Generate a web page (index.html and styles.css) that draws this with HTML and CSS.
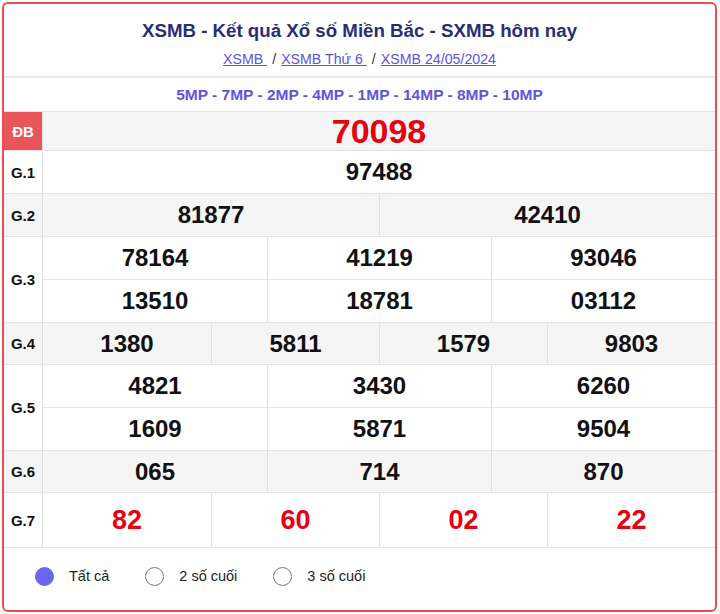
FILE: index.html
```html
<!DOCTYPE html>
<html lang="vi">
<head>
<meta charset="utf-8">
<title>XSMB</title>
<link rel="stylesheet" href="styles.css">
</head>
<body>
<div class="box">
  <div class="head">
    <h1 class="title">XSMB - Kết quả Xổ số Miền Bắc - SXMB hôm nay</h1>
    <div class="crumbs">
      <a href="#">XSMB </a><span class="sep">/</span><a href="#">XSMB Thứ 6 </a><span class="sep">/</span><a href="#">XSMB 24/05/2024</a>
    </div>
  </div>
  <div class="codes">5MP - 7MP - 2MP - 4MP - 1MP - 14MP - 8MP - 10MP</div>
  <div class="results">
    <div class="row db gray">
      <div class="label">ĐB</div>
      <div class="cells c1"><div class="cell">70098</div></div>
    </div>
    <div class="row">
      <div class="label">G.1</div>
      <div class="cells c1"><div class="cell">97488</div></div>
    </div>
    <div class="row gray">
      <div class="label">G.2</div>
      <div class="cells c2"><div class="cell">81877</div><div class="cell">42410</div></div>
    </div>
    <div class="row">
      <div class="label">G.3</div>
      <div class="cells c3">
        <div class="cell">78164</div><div class="cell">41219</div><div class="cell">93046</div>
        <div class="cell">13510</div><div class="cell">18781</div><div class="cell">03112</div>
      </div>
    </div>
    <div class="row gray short">
      <div class="label">G.4</div>
      <div class="cells c4"><div class="cell">1380</div><div class="cell">5811</div><div class="cell">1579</div><div class="cell">9803</div></div>
    </div>
    <div class="row">
      <div class="label">G.5</div>
      <div class="cells c3">
        <div class="cell">4821</div><div class="cell">3430</div><div class="cell">6260</div>
        <div class="cell">1609</div><div class="cell">5871</div><div class="cell">9504</div>
      </div>
    </div>
    <div class="row gray short">
      <div class="label">G.6</div>
      <div class="cells c3"><div class="cell">065</div><div class="cell">714</div><div class="cell">870</div></div>
    </div>
    <div class="row g7">
      <div class="label">G.7</div>
      <div class="cells c4"><div class="cell">82</div><div class="cell">60</div><div class="cell">02</div><div class="cell">22</div></div>
    </div>
  </div>
  <div class="filters">
    <label class="opt"><span class="radio on"></span>Tất cả</label>
    <label class="opt"><span class="radio"></span>2 số cuối</label>
    <label class="opt"><span class="radio"></span>3 số cuối</label>
  </div>
</div>
</body>
</html>
```
FILE: styles.css
```css
* { box-sizing: border-box; }
html, body { margin: 0; padding: 0; background: #fff; }
body { font-family: "Liberation Sans", Arial, sans-serif; color: #111; }

.box {
  margin: 2px 3px 2px 2px;
  height: 610px;
  border: 2px solid #ee4d50;
  border-radius: 6px;
  overflow: hidden;
  display: flex;
  flex-direction: column;
}

.head {
  padding: 16px 0 7px;
  text-align: center;
  border-bottom: 2px solid #e8e8f0;
}
.title {
  margin: 0;
  font-size: 18.7px;
  line-height: 22px;
  font-weight: bold;
  color: #282e74;
}
.crumbs {
  margin-top: 7px;
  font-size: 14.2px;
  line-height: 20px;
  color: #444;
}
.crumbs a { color: #5b53d8; text-decoration: underline; }
.crumbs .sep { margin: 0 5px; color: #333; }

.codes {
  height: 34px;
  display: flex;
  align-items: center;
  justify-content: center;
  font-size: 15.5px;
  font-weight: bold;
  color: #5f55d9;
  border-bottom: 1px solid #e4e4e4;
}

.results { display: flex; flex-direction: column; }
.row {
  display: flex;
  border-bottom: 1px solid #e2e2e2;
  background: #fff;
}
.row.gray { background: #f5f5f5; }
.label {
  width: 39px;
  flex: none;
  display: flex;
  align-items: center;
  justify-content: center;
  font-size: 15px;
  font-weight: bold;
  color: #111;
  border-right: 1px solid #e0e0e0;
}
.cells { flex: 1; display: grid; }
.c1 { grid-template-columns: 1fr; }
.c2 { grid-template-columns: 1fr 1fr; }
.c3 { grid-template-columns: 1fr 1fr 1fr; }
.c4 { grid-template-columns: 1fr 1fr 1fr 1fr; }
.cell {
  height: 42px;
  display: flex;
  align-items: center;
  justify-content: center;
  font-size: 24px;
  font-weight: bold;
  color: #111;
  border-left: 1px solid #e0e0e0;
}
.c1 .cell, .c2 .cell:nth-child(2n+1), .c3 .cell:nth-child(3n+1), .c4 .cell:nth-child(4n+1) { border-left: none; }
.c3 .cell:nth-child(n+4) { border-top: 1px solid #e6e6e6; height: 43px; }
.row.short .cell { height: 41px; }

.db .cell { height: 38px; font-size: 34px; color: #e60012; }
.db .label { background: #e9555b; color: #fff; }

.g7 .cell { height: 54px; font-size: 27px; color: #e60012; }

.filters {
  flex: 1;
  display: flex;
  align-items: center;
  padding: 0 0 6px 31px;
}
.opt {
  display: flex;
  align-items: center;
  font-size: 14.5px;
  color: #222;
  margin-right: 36px;
}
.radio {
  width: 19px;
  height: 19px;
  border-radius: 50%;
  border: 1px solid #767676;
  margin-right: 15px;
  background: #fff;
}
.radio.on { background: #6d65ee; border-color: #6d65ee; }
```
